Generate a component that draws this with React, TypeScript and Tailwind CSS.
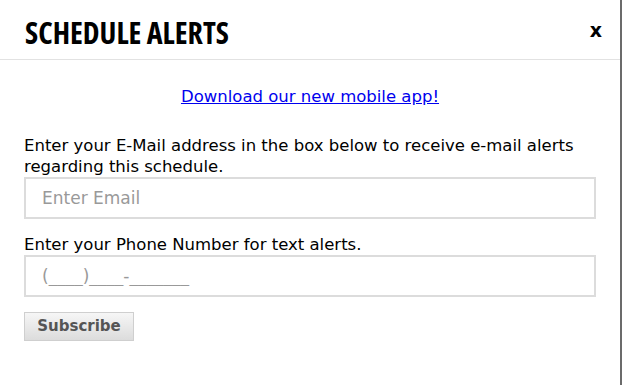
import React, { useState } from 'react';

export default function App() {
  const [email, setEmail] = useState('');
  const [phone, setPhone] = useState('');

  return (
    <div className="w-[623px] h-[385px] bg-white overflow-hidden">
      <div className="w-[622px] h-[385px] border-r-2 border-[#6b6b6b] bg-white">
        {/* Header */}
        <div className="h-[60px] border-b border-[#e2e2e2] flex items-center justify-between pl-[25px] pr-[18px]">
          <h1
            className="text-[30px] font-bold text-black leading-none pt-[7px]"
            style={{ fontFamily: '"Open Sans", sans-serif', fontStretch: '75%' }}
          >
            SCHEDULE ALERTS
          </h1>
          <button
            className="text-[19px] font-bold text-black leading-none pt-[1px]"
            style={{ fontFamily: '"DejaVu Sans", sans-serif' }}
          >
            x
          </button>
        </div>

        {/* Body */}
        <div
          className="pl-[24px] pr-[24px] text-[16.5px] text-black"
          style={{ fontFamily: '"DejaVu Sans", sans-serif' }}
        >
          <div className="pt-[25px] text-center">
            <a href="#" className="text-[#0000ee] underline">
              Download our new mobile app!
            </a>
          </div>

          <p className="mt-[25px] leading-[21px]">
            Enter your E-Mail address in the box below to receive e-mail alerts regarding this schedule.
          </p>
          <input
            value={email}
            onChange={(e) => setEmail(e.target.value)}
            placeholder="Enter Email"
            className="block w-full h-[42px] border-2 border-[#dcdcdc] px-[16px] text-[17px] placeholder:text-[#999] outline-none"
          />

          <p className="mt-[15px] leading-[21px]">Enter your Phone Number for text alerts.</p>
          <input
            value={phone}
            onChange={(e) => setPhone(e.target.value)}
            placeholder="(____)____-_______"
            className="block w-full h-[42px] border-2 border-[#dcdcdc] px-[16px] text-[17px] placeholder:text-[#999] outline-none"
          />

          <button className="mt-[15px] w-[110px] h-[29px] border border-[#cfcfcf] bg-gradient-to-b from-[#f6f6f6] to-[#dcdcdc] text-[15px] font-bold text-[#555]">
            Subscribe
          </button>
        </div>
      </div>
    </div>
  );
}
